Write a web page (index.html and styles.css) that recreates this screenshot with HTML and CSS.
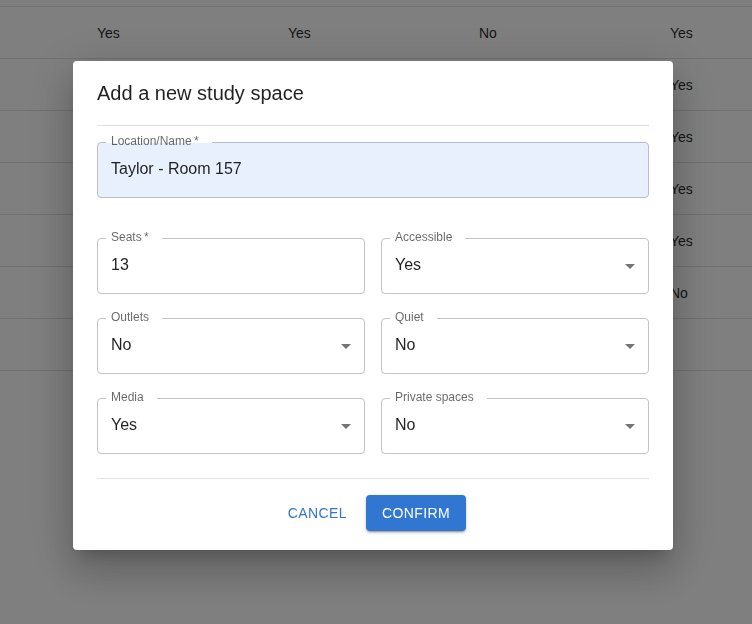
FILE: index.html
```html
<!DOCTYPE html>
<html lang="en">
<head>
<meta charset="utf-8">
<title>Study spaces</title>
<link rel="stylesheet" href="styles.css">
</head>
<body>
<div class="table">
  <div class="row head"><div class="cell"></div><div class="cell"></div><div class="cell"></div><div class="cell"></div><div class="cell"></div></div>
  <div class="row"><div class="cell"></div><div class="cell">Yes</div><div class="cell">Yes</div><div class="cell">No</div><div class="cell">Yes</div></div>
  <div class="row"><div class="cell"></div><div class="cell"></div><div class="cell"></div><div class="cell"></div><div class="cell">Yes</div></div>
  <div class="row"><div class="cell"></div><div class="cell"></div><div class="cell"></div><div class="cell"></div><div class="cell">Yes</div></div>
  <div class="row"><div class="cell"></div><div class="cell"></div><div class="cell"></div><div class="cell"></div><div class="cell">Yes</div></div>
  <div class="row"><div class="cell"></div><div class="cell"></div><div class="cell"></div><div class="cell"></div><div class="cell">Yes</div></div>
  <div class="row"><div class="cell"></div><div class="cell"></div><div class="cell"></div><div class="cell"></div><div class="cell">No</div></div>
  <div class="row"><div class="cell"></div><div class="cell"></div><div class="cell"></div><div class="cell"></div><div class="cell"></div></div>
</div>

<div class="backdrop">
  <div class="dialog">
    <h2 class="dialog-title">Add a new study space</h2>
    <div class="dialog-content">
      <div class="field autofill">
        <span class="label">Location/Name&thinsp;*</span>
        <span class="value">Taylor - Room 157</span>
      </div>
      <div class="grid">
        <div class="field">
          <span class="label">Seats&thinsp;*</span>
          <span class="value">13</span>
        </div>
        <div class="field select">
          <span class="label">Accessible</span>
          <span class="value">Yes</span>
          <svg class="arrow" viewBox="0 0 24 24" width="24" height="24"><path d="M7 10l5 5 5-5z"/></svg>
        </div>
        <div class="field select">
          <span class="label">Outlets</span>
          <span class="value">No</span>
          <svg class="arrow" viewBox="0 0 24 24" width="24" height="24"><path d="M7 10l5 5 5-5z"/></svg>
        </div>
        <div class="field select">
          <span class="label">Quiet</span>
          <span class="value">No</span>
          <svg class="arrow" viewBox="0 0 24 24" width="24" height="24"><path d="M7 10l5 5 5-5z"/></svg>
        </div>
        <div class="field select">
          <span class="label">Media</span>
          <span class="value">Yes</span>
          <svg class="arrow" viewBox="0 0 24 24" width="24" height="24"><path d="M7 10l5 5 5-5z"/></svg>
        </div>
        <div class="field select">
          <span class="label">Private spaces</span>
          <span class="value">No</span>
          <svg class="arrow" viewBox="0 0 24 24" width="24" height="24"><path d="M7 10l5 5 5-5z"/></svg>
        </div>
      </div>
    </div>
    <div class="dialog-actions">
      <button class="btn btn-text">Cancel</button>
      <button class="btn btn-contained">Confirm</button>
    </div>
  </div>
</div>
</body>
</html>
```

FILE: styles.css
```css
* { box-sizing: border-box; }

html, body {
  margin: 0;
  padding: 0;
  height: 100%;
  overflow: hidden;
}

body {
  font-family: "Liberation Sans", Arial, sans-serif;
  color: rgba(0, 0, 0, 0.87);
  background: #fff;
}

/* background table */
.table {
  margin-top: -45px;
  overflow: hidden;
}

.row {
  display: grid;
  grid-template-columns: 81px 191px 191px 191px 1fr;
  height: 52px;
  border-bottom: 1px solid #e0e0e0;
}

.cell {
  padding-left: 16px;
  font-size: 14px;
  display: flex;
  align-items: center;
  white-space: nowrap;
}

/* modal */
.backdrop {
  position: fixed;
  inset: 0;
  background: rgba(0, 0, 0, 0.5);
  display: flex;
  justify-content: center;
  align-items: center;
  padding-right: 6px;
  padding-bottom: 13px;
}

.dialog {
  width: 600px;
  background: #fff;
  border-radius: 4px;
  box-shadow: 0px 11px 15px -7px rgba(0, 0, 0, 0.2),
              0px 24px 38px 3px rgba(0, 0, 0, 0.14),
              0px 9px 46px 8px rgba(0, 0, 0, 0.12);
  padding: 0 24px;
}

.dialog-title {
  margin: 0;
  padding: 16px 0;
  font-size: 20px;
  line-height: 32px;
  font-weight: 400;
  color: rgba(0, 0, 0, 0.87);
}

.dialog-content {
  border-top: 1px solid #e0e0e0;
  border-bottom: 1px solid #e0e0e0;
  padding: 16px 0 24px;
  display: flex;
  flex-direction: column;
  gap: 40px;
}

.grid {
  display: grid;
  grid-template-columns: 1fr 1fr;
  column-gap: 16px;
  row-gap: 24px;
}

.field {
  position: relative;
  height: 56px;
  border: 1px solid #c4c4c4;
  border-radius: 4px;
  padding: 0 6px 0 13px;
  display: flex;
  align-items: center;
}

.field.autofill {
  background: #e8f0fe;
  border-color: #b8bec8;
}

.label {
  position: absolute;
  left: 8px;
  top: -8px;
  height: 12px;
  line-height: 12px;
  font-size: 12px;
  padding: 0 13px 0 5px;
  color: rgba(0, 0, 0, 0.6);
  background: linear-gradient(#fff 8px, transparent 8px);
  white-space: nowrap;
}

.value {
  flex: 1;
  font-size: 16px;
  color: rgba(0, 0, 0, 0.87);
  padding-bottom: 2px;
}

.arrow {
  flex: none;
  fill: rgba(0, 0, 0, 0.54);
}

.dialog-actions {
  display: flex;
  justify-content: center;
  align-items: center;
  gap: 11px;
  padding: 16px 0 19px;
}

.btn {
  font-family: "Liberation Sans", Arial, sans-serif;
  font-size: 14px;
  line-height: 24px;
  letter-spacing: 0.4px;
  text-transform: uppercase;
  border: none;
  border-radius: 4px;
  cursor: pointer;
  height: 36px;
}

.btn-text {
  background: transparent;
  color: #3176d0;
  padding: 6px 8px;
}

.btn-contained {
  background: #3176d0;
  color: #fff;
  padding: 6px 16px;
  box-shadow: 0px 3px 1px -2px rgba(0, 0, 0, 0.2),
              0px 2px 2px 0px rgba(0, 0, 0, 0.14),
              0px 1px 5px 0px rgba(0, 0, 0, 0.12);
}
```
